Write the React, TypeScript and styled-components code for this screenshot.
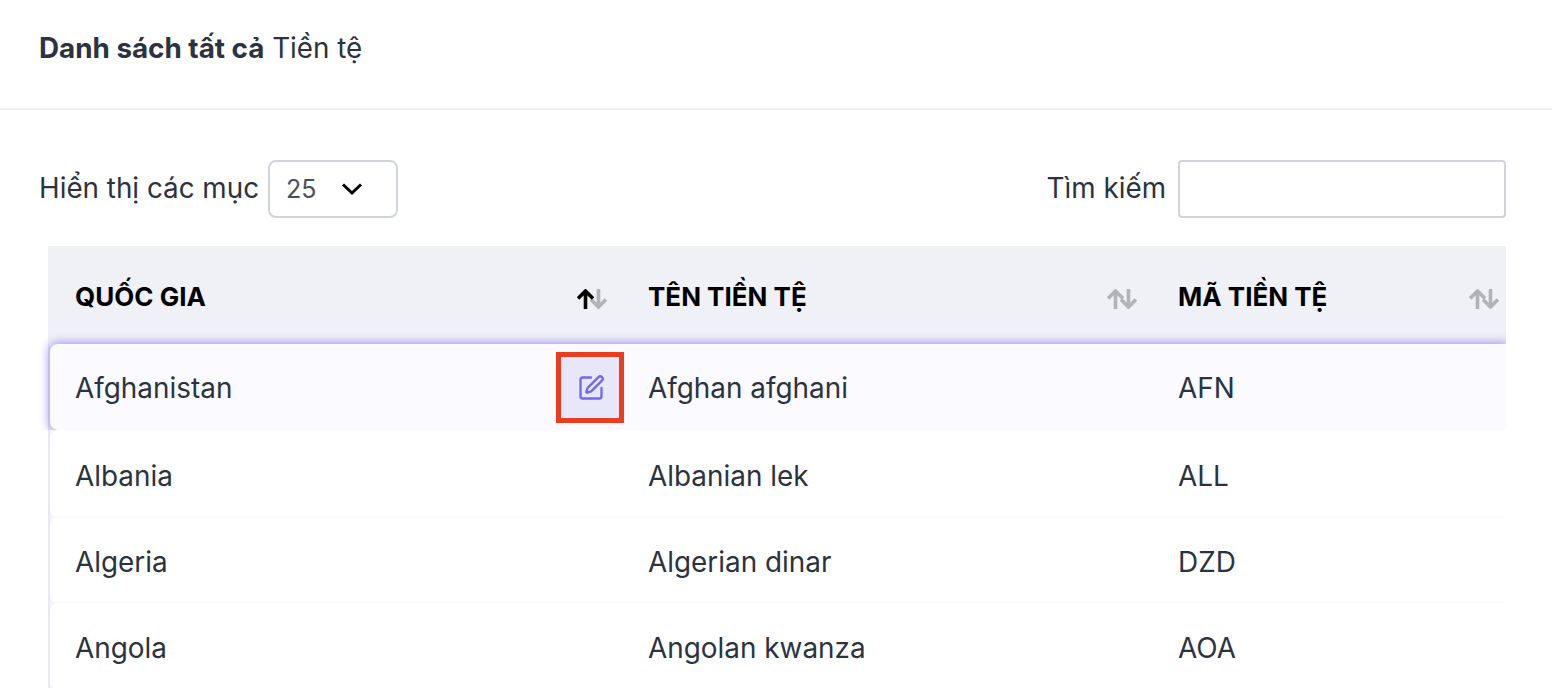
import * as React from 'react'
import styled, { createGlobalStyle } from 'styled-components'
import { SquarePen } from 'lucide-react'

const GlobalStyle = createGlobalStyle`
  html, body {
    margin: 0;
    padding: 0;
    height: 688px;
    overflow: hidden;
    background: #fff;
    font-family: Inter, "Liberation Sans", sans-serif;
    color: #2b3340;
  }
  * {
    box-sizing: border-box;
  }
`

const Page = styled.div`
  width: 1552px;
  height: 688px;
  overflow: hidden;
`

const TitleBar = styled.div`
  height: 110px;
  padding: 32px 39px 0;
  border-bottom: 2px solid #eff0f2;
  font-size: 27.8px;
  line-height: 32px;
`

const Strong = styled.strong`
  font-weight: 700;
`

const Toolbar = styled.div`
  display: flex;
  justify-content: space-between;
  align-items: center;
  padding: 50px 46px 0 39px;
`

const Field = styled.label`
  display: flex;
  align-items: center;
  font-size: 27.8px;
  line-height: 32px;
`

const FieldText = styled.span`
  margin-bottom: 2px;
`

const Select = styled.div`
  display: flex;
  align-items: center;
  justify-content: space-between;
  width: 130px;
  height: 58px;
  margin-left: 9px;
  padding: 0 33px 0 16px;
  border: 2px solid #d0d5da;
  border-radius: 8px;
  font-size: 25px;
  color: #4a5058;
`

const SearchBox = styled.div`
  width: 328px;
  height: 58px;
  margin-left: 12px;
  border: 2px solid #d0d5da;
  border-radius: 4px;
`

const Table = styled.div`
  margin: 28px 46px 0 48px;
`

const HeadRow = styled.div`
  display: grid;
  grid-template-columns: 573px 530px 355px;
  height: 98px;
  background: #f0f1f6;
  align-items: center;
`

const HeadCell = styled.div`
  display: flex;
  align-items: center;
  justify-content: space-between;
  padding: 2px 14px 0 27px;
  font-size: 26px;
  font-weight: 700;
  color: #000;
  &:last-child {
    padding-right: 7px;
  }
`

const Body = styled.div`
  border-left: 2px solid #e9e9f1;
  background: #f6f6fa;
`

const Row = styled.div<{ $active?: boolean }>`
  position: relative;
  display: grid;
  grid-template-columns: 573px 530px 353px;
  height: 86px;
  align-items: center;
  font-size: 27.9px;
  border-radius: 8px 0 0 8px;
  background: ${({ $active }) => ($active ? '#fbfaff' : '#fff')};
  box-shadow: ${({ $active }) =>
    $active ? '0 0 10px 2px rgba(115, 103, 240, 0.6)' : '0 -1px 1px rgba(60, 60, 80, 0.03)'};
  z-index: ${({ $active }) => ($active ? 1 : 0)};
  clip-path: inset(-12px 0 0 -12px);
  &:nth-child(2) {
    height: 87px;
  }
`

const Cell = styled.div<{ $active?: boolean }>`
  display: flex;
  align-items: center;
  justify-content: space-between;
  padding: ${({ $active }) => ($active ? '1px' : '4px')} 10px 0 25px;
  &:first-child {
    padding-right: 0;
  }
`

const EditButton = styled.button`
  display: flex;
  align-items: center;
  justify-content: center;
  width: 68px;
  height: 71px;
  margin-right: -1px;
  padding: 0 0 0 2px;
  border: 5px solid #e93d21;
  background: #e8e7fa;
  color: #7367f0;
`

const ArrowIcon = styled.svg`
  flex: none;
  margin-top: 6px;
`

const Arrows = ({ active }: { active?: boolean }) => (
  <ArrowIcon width="30" height="20" viewBox="0 0 30 20" fill="none" strokeWidth="3.6" aria-hidden="true">
    <path d="M21.500 0v18M14 10.500l7.500 7.500 7.500-7.500" stroke="#b2b3b6" />
    <path d="M8.500 20V2M1 9.500 8.500 2 16 9.500" stroke={active ? '#000' : '#b2b3b6'} />
  </ArrowIcon>
)

const Chevron = () => (
  <svg width="22" height="14" viewBox="0 0 22 14" fill="none" stroke="#000" strokeWidth="3" aria-hidden="true">
    <path d="M2 2.500 11 11l9-8.500" />
  </svg>
)

const currencies = [
  ['Afghanistan', 'Afghan afghani', 'AFN'],
  ['Albania', 'Albanian lek', 'ALL'],
  ['Algeria', 'Algerian dinar', 'DZD'],
  ['Angola', 'Angolan kwanza', 'AOA'],
]

export default function App() {
  return (
    <Page>
      <GlobalStyle />
      <TitleBar>
        <Strong>Danh sách tất cả</Strong> Tiền tệ
      </TitleBar>
      <Toolbar>
        <Field>
          <FieldText>Hiển thị các mục</FieldText>
          <Select>
            25
            <Chevron />
          </Select>
        </Field>
        <Field>
          <FieldText>Tìm kiếm</FieldText>
          <SearchBox />
        </Field>
      </Toolbar>
      <Table>
        <HeadRow>
          <HeadCell>
            QUỐC GIA
            <Arrows active />
          </HeadCell>
          <HeadCell>
            TÊN TIỀN TỆ
            <Arrows />
          </HeadCell>
          <HeadCell>
            MÃ TIỀN TỆ
            <Arrows />
          </HeadCell>
        </HeadRow>
        <Body>
          {currencies.map(([country, name, code], index) => (
            <Row key={code} $active={index === 0}>
              <Cell $active={index === 0}>
                {country}
                {index === 0 && (
                  <EditButton>
                    <SquarePen size={28} strokeWidth={2} />
                  </EditButton>
                )}
              </Cell>
              <Cell $active={index === 0}>{name}</Cell>
              <Cell $active={index === 0}>{code}</Cell>
            </Row>
          ))}
        </Body>
      </Table>
    </Page>
  )
}
